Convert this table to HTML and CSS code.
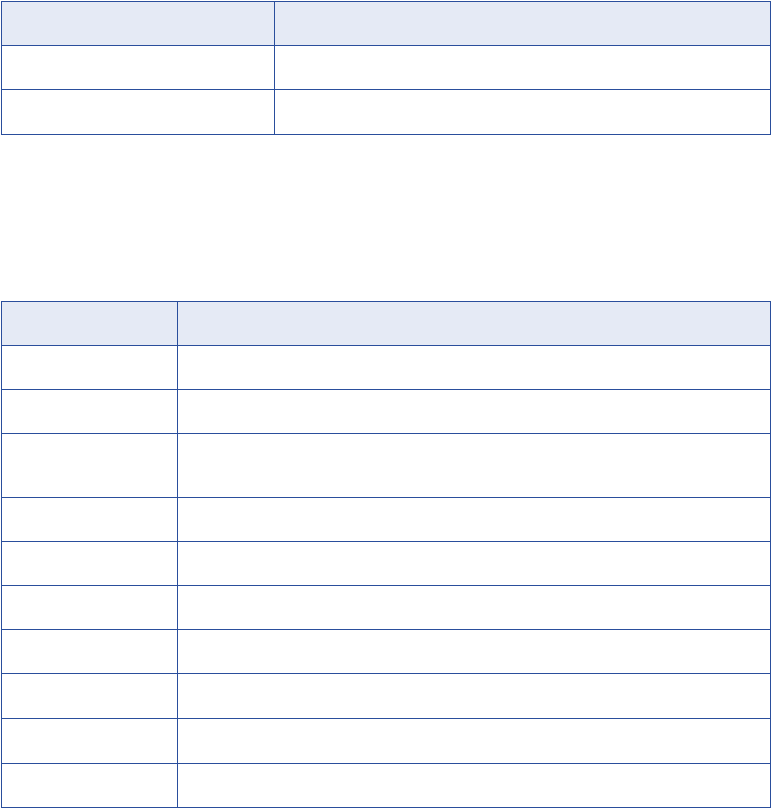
FILE: index.html
```html
<!DOCTYPE html>
<html lang="en">
<head>
  <meta charset="UTF-8">
  <meta name="viewport" content="width=device-width, initial-scale=1.0">
  <title>Tables</title>
  <link rel="stylesheet" href="styles.css">
</head>
<body>
  <div class="page">
    <table class="grid first">
      <colgroup><col class="c1"><col></colgroup>
      <thead>
        <tr><th></th><th></th></tr>
      </thead>
      <tbody>
        <tr><td></td><td></td></tr>
        <tr class="r45"><td></td><td></td></tr>
      </tbody>
    </table>

    <table class="grid second">
      <colgroup><col class="c2"><col></colgroup>
      <thead>
        <tr><th></th><th></th></tr>
      </thead>
      <tbody>
        <tr><td></td><td></td></tr>
        <tr><td></td><td></td></tr>
        <tr class="tall"><td></td><td></td></tr>
        <tr><td></td><td></td></tr>
        <tr><td></td><td></td></tr>
        <tr><td></td><td></td></tr>
        <tr><td></td><td></td></tr>
        <tr class="r45"><td></td><td></td></tr>
        <tr class="r45"><td></td><td></td></tr>
        <tr><td></td><td></td></tr>
      </tbody>
    </table>
  </div>
</body>
</html>
```

FILE: styles.css
```css
body {
  margin: 0;
  padding: 0;
  background-color: #fff;
  font-family: 'Liberation Sans', Arial, sans-serif;
  overflow: hidden;
}

.page {
  padding: 1px 0 0 1px;
}

.grid {
  border-collapse: collapse;
  width: 770px;
  table-layout: fixed;
}

.grid th,
.grid td {
  border: 1px solid #2a4e9c;
  padding: 0;
  height: 43px;
}

.grid th {
  background-color: #e5eaf5;
}

.grid tr.r45 td {
  height: 44px;
}

.grid tr.tall td {
  height: 63px;
}

.first .c1 {
  width: 273px;
}

.second {
  margin-top: 166px;
}

.second .c2 {
  width: 176px;
}
```
